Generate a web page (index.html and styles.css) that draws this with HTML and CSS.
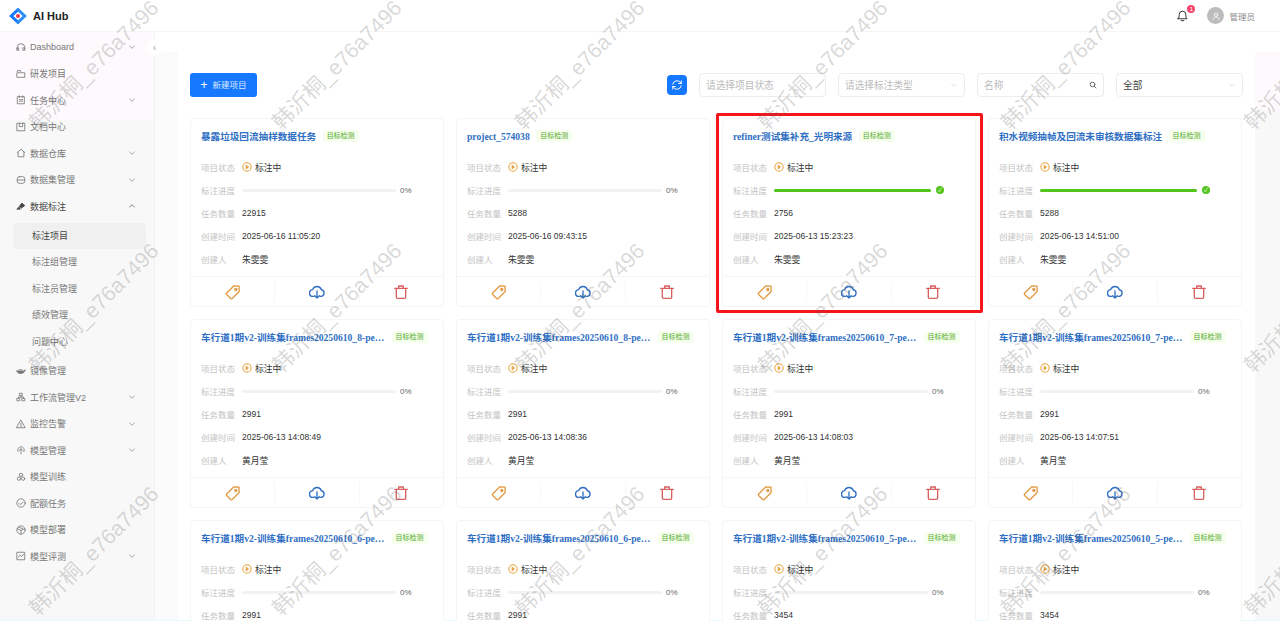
FILE: index.html
```html
<!DOCTYPE html>
<html lang="en">
<head>
    <meta charset="UTF-8">
    <title>AI Hub</title>
    <link rel="stylesheet" href="styles.css">
</head>
<body>
    <svg class="sprite" width="0" height="0">
        <symbol id="i-tag" viewBox="0 0 24 24"><path d="M2.500 13.500 13 3l8 .3.300 8-10.500 10.500a1.600 1.600 0 0 1-2.200 0l-6.100-6.100a1.600 1.600 0 0 1 0-2.200z"/><circle cx="16.200" cy="8.200" r="1.500"/></symbol>
        <symbol id="i-cloud" viewBox="0 0 24 24"><path d="M7.500 18.500H6a5 5 0 0 1-.5-10 6.800 6.800 0 0 1 13 .1 5 5 0 0 1-.5 9.900h-1.500"/><path d="M12 10.500v10M8.500 17.500 12 21l3.500-3.500"/></symbol>
        <symbol id="i-trash" viewBox="0 0 24 24"><path d="M2.500 6.500h19M8.500 6.500V3h7v3.500M5 6.500V20a1.500 1.500 0 0 0 1.500 1.500h11A1.500 1.500 0 0 0 19 20V6.500"/></symbol>
        <symbol id="i-play" viewBox="0 0 24 24"><circle cx="12" cy="12" r="10"/><path d="M10 8l5 4-5 4z"/></symbol>
        <symbol id="i-down" viewBox="0 0 24 24"><path d="M5 9l7 7 7-7"/></symbol>
        <symbol id="i-up" viewBox="0 0 24 24"><path d="M5 15l7-7 7 7"/></symbol>
        <symbol id="i-headset" viewBox="0 0 24 24"><path d="M3 17v-4a9 9 0 0 1 18 0v4"/><path d="M3 14h3.500v6H3zM17.500 14H21v6h-3.500z"/></symbol>
        <symbol id="i-folder" viewBox="0 0 24 24"><path d="M3 6V4h8v2M3 9h18v11H3z"/></symbol>
        <symbol id="i-task" viewBox="0 0 24 24"><path d="M4 4h16v17H4zM8 2v4M16 2v4M8 11h8M8 15h8"/></symbol>
        <symbol id="i-doc" viewBox="0 0 24 24"><path d="M3 3h18v18H3zM8 3v8h8V3"/></symbol>
        <symbol id="i-home" viewBox="0 0 24 24"><path d="M3 11 12 3l9 8M5 9.500V21h14V9.500"/></symbol>
        <symbol id="i-db" viewBox="0 0 24 24"><rect x="3" y="4" width="18" height="16" rx="5"/><path d="M3 12h18"/></symbol>
        <symbol id="i-pen" viewBox="0 0 24 24"><path d="M3 20l4-1 3 1-3-5zM8 13l6-8 7 6-8 6z" fill="currentColor"/></symbol>
        <symbol id="i-whale" viewBox="0 0 24 24"><path d="M2 12h18c1-2 1-3 2-3-1 6-5 9-11 9-5 0-8-2-9-6z" fill="currentColor"/><path d="M7 9h8"/></symbol>
        <symbol id="i-flow" viewBox="0 0 24 24"><path d="M9 3h6v6H9zM3 15h6v6H3zM15 15h6v6h-6zM12 9v3M6 15v-3h12v3"/></symbol>
        <symbol id="i-warn" viewBox="0 0 24 24"><path d="M12 3 22 21H2zM12 10v6M12 18v1"/></symbol>
        <symbol id="i-model" viewBox="0 0 24 24"><path d="M5 16a8 8 0 1 1 14 0M12 21V9M8 13l4-4 4 4"/></symbol>
        <symbol id="i-train" viewBox="0 0 24 24"><circle cx="12" cy="7" r="4"/><circle cx="7" cy="16" r="4"/><circle cx="17" cy="16" r="4"/></symbol>
        <symbol id="i-quota" viewBox="0 0 24 24"><circle cx="12" cy="12" r="10"/><path d="M7 13l3 3 7-6"/></symbol>
        <symbol id="i-deploy" viewBox="0 0 24 24"><circle cx="12" cy="12" r="10"/><path d="M3 9l9 4 9-4M12 13v9M7 5l9 4"/></symbol>
        <symbol id="i-chart" viewBox="0 0 24 24"><path d="M3 3h18v18H3zM6 15l4-5 4 3 4-5"/></symbol>
        <symbol id="i-refresh" viewBox="0 0 24 24"><path d="M3.500 10.500A8.700 8.700 0 0 1 19 7l1.500 2M20.500 4v5h-5M20.500 13.500A8.700 8.700 0 0 1 5 17l-1.500-2M3.500 20v-5h5"/></symbol>
        <symbol id="i-search" viewBox="0 0 24 24"><circle cx="10.500" cy="10.500" r="7"/><path d="M16 16l5 5"/></symbol>
        <symbol id="i-bell" viewBox="0 0 24 24"><path d="M3.500 18h17c-2-2-2.500-3.500-2.500-8a6 6 0 0 0-12 0c0 4.500-.5 6-2.500 8zM9.500 21.500h5"/></symbol>
        <symbol id="i-user" viewBox="0 0 24 24"><circle cx="12" cy="9" r="4"/><path d="M5 20c1-4 4-6 7-6s6 2 7 6"/></symbol>
    </svg>

    <div class="app">
        <header class="topbar">
            <div class="brand">
                <svg class="logo" viewBox="0 0 24 24">
                    <path d="M13 3.500 4 12l9 8.500" fill="none" stroke="#1677ff" stroke-width="3.600"/>
                    <path d="M11 3.500 20 12l-9 8.500" fill="none" stroke="#2f8ff7" stroke-width="3.600"/>
                    <circle cx="12" cy="12" r="2.400" fill="#e8384f"/>
                </svg>
                <span>AI Hub</span>
            </div>
            <div class="top-right">
                <div class="bell">
                    <svg class="ico"><use href="#i-bell"/></svg>
                    <span class="badge">1</span>
                </div>
                <div class="avatar"><svg class="ico"><use href="#i-user"/></svg></div>
                <span class="username">管理员</span>
            </div>
        </header>

        <div class="layout">
            <aside class="sidebar">
                <nav class="menu">
                    <a class="menu-item"><svg class="ico"><use href="#i-headset"/></svg><span>Dashboard</span><svg class="ico arrow"><use href="#i-down"/></svg></a>
                    <a class="menu-item"><svg class="ico"><use href="#i-folder"/></svg><span>研发项目</span></a>
                    <a class="menu-item"><svg class="ico"><use href="#i-task"/></svg><span>任务中心</span><svg class="ico arrow"><use href="#i-down"/></svg></a>
                    <a class="menu-item"><svg class="ico"><use href="#i-doc"/></svg><span>文档中心</span></a>
                    <a class="menu-item"><svg class="ico"><use href="#i-home"/></svg><span>数据仓库</span><svg class="ico arrow"><use href="#i-down"/></svg></a>
                    <a class="menu-item"><svg class="ico"><use href="#i-db"/></svg><span>数据集管理</span><svg class="ico arrow"><use href="#i-down"/></svg></a>
                    <a class="menu-item open"><svg class="ico"><use href="#i-pen"/></svg><span>数据标注</span><svg class="ico arrow"><use href="#i-up"/></svg></a>
                    <div class="submenu">
                        <a class="sub-item active">标注项目</a>
                        <a class="sub-item">标注组管理</a>
                        <a class="sub-item">标注员管理</a>
                        <a class="sub-item">绩效管理</a>
                        <a class="sub-item">问题中心</a>
                    </div>
                    <a class="menu-item"><svg class="ico"><use href="#i-whale"/></svg><span>镜像管理</span></a>
                    <a class="menu-item"><svg class="ico"><use href="#i-flow"/></svg><span>工作流管理V2</span><svg class="ico arrow"><use href="#i-down"/></svg></a>
                    <a class="menu-item"><svg class="ico"><use href="#i-warn"/></svg><span>监控告警</span><svg class="ico arrow"><use href="#i-down"/></svg></a>
                    <a class="menu-item"><svg class="ico"><use href="#i-model"/></svg><span>模型管理</span><svg class="ico arrow"><use href="#i-down"/></svg></a>
                    <a class="menu-item"><svg class="ico"><use href="#i-train"/></svg><span>模型训练</span></a>
                    <a class="menu-item"><svg class="ico"><use href="#i-quota"/></svg><span>配额任务</span></a>
                    <a class="menu-item"><svg class="ico"><use href="#i-deploy"/></svg><span>模型部署</span></a>
                    <a class="menu-item"><svg class="ico"><use href="#i-chart"/></svg><span>模型评测</span><svg class="ico arrow"><use href="#i-down"/></svg></a>
                </nav>
                <button class="collapse">‹</button>
            </aside>

            <main class="content">
                <div class="toolbar">
                    <button class="btn-new"><span class="plus">+</span>新建项目</button>
                    <div class="filters">
                        <button class="btn-refresh"><svg class="ico"><use href="#i-refresh"/></svg></button>
                        <div class="field placeholder">请选择项目状态</div>
                        <div class="field placeholder">请选择标注类型<svg class="ico"><use href="#i-down"/></svg></div>
                        <div class="field placeholder">名称<svg class="ico dark"><use href="#i-search"/></svg></div>
                        <div class="field">全部<svg class="ico"><use href="#i-down"/></svg></div>
                    </div>
                </div>

                <div class="cards" id="cards"></div>
            </main>
        </div>
    </div>

    <div class="watermarks" id="watermarks"></div>

    <script>
        // card data, in page order
        var P1 = "车行道1期v2-训练集frames20250610_";
        var projects = [
            { title: "暴露垃圾回流抽样数据任务", pct: 0, count: 22915, time: "2025-06-16 11:05:20", who: "朱雯雯" },
            { title: "project_574038", pct: 0, count: 5288, time: "2025-06-16 09:43:15", who: "朱雯雯" },
            { title: "refiner测试集补充_光明来源", pct: 100, count: 2756, time: "2025-06-13 15:23:23", who: "朱雯雯" },
            { title: "积水视频抽帧及回流未审核数据集标注", pct: 100, count: 5288, time: "2025-06-13 14:51:00", who: "朱雯雯" },
            { title: P1 + "8-person", pct: 0, count: 2991, time: "2025-06-13 14:08:49", who: "黄月莹" },
            { title: P1 + "8-person", pct: 0, count: 2991, time: "2025-06-13 14:08:36", who: "黄月莹" },
            { title: P1 + "7-person", pct: 0, count: 2991, time: "2025-06-13 14:08:03", who: "黄月莹" },
            { title: P1 + "7-person", pct: 0, count: 2991, time: "2025-06-13 14:07:51", who: "黄月莹" },
            { title: P1 + "6-person", pct: 0, count: 2991, time: "2025-06-13 14:07:30", who: "黄月莹" },
            { title: P1 + "6-person", pct: 0, count: 2991, time: "2025-06-13 14:07:12", who: "黄月莹" },
            { title: P1 + "5-person", pct: 0, count: 3454, time: "2025-06-13 14:06:50", who: "黄月莹" },
            { title: P1 + "5-person", pct: 0, count: 3454, time: "2025-06-13 14:06:31", who: "黄月莹" }
        ];

        function progressHtml(pct) {
            if (pct === 100) {
                return "<div class='bar'><div class='bar-fill'></div></div><span class='done'>✓</span>";
            }
            return "<div class='bar'></div><span class='pct'>" + pct + "%</span>";
        }

        var html = "";
        projects.forEach(function(p, i) {
            html += "<div class='card'>" +
                "<div class='card-body'>" +
                "<div class='card-title'><span class='name'>" + p.title + "</span><span class='tag'>目标检测</span></div>" +
                "<div class='row'><label>项目状态</label><svg class='ico state'><use href='#i-play'/></svg><span class='status'>标注中</span></div>" +
                "<div class='row'><label>标注进度</label>" + progressHtml(p.pct) + "</div>" +
                "<div class='row'><label>任务数量</label><span>" + p.count + "</span></div>" +
                "<div class='row'><label>创建时间</label><span>" + p.time + "</span></div>" +
                "<div class='row'><label>创建人</label><span class='status'>" + p.who + "</span></div>" +
                "</div>" +
                "<div class='card-foot'>" +
                "<div><svg class='ico orange'><use href='#i-tag'/></svg></div>" +
                "<div><svg class='ico blue'><use href='#i-cloud'/></svg></div>" +
                "<div><svg class='ico red'><use href='#i-trash'/></svg></div>" +
                "</div>" +
                (i === 2 ? "<div class='highlight'></div>" : "") +
                "</div>";
        });
        document.getElementById("cards").innerHTML = html;

        var marks = "";
        for (var i = 0; i < 18; i++) {
            marks += "<span>韩沂桐_e76a7496</span>";
        }
        document.getElementById("watermarks").innerHTML = marks;
    </script>
</body>
</html>
```

FILE: styles.css
```css
* {
    box-sizing: border-box;
}

html, body {
    margin: 0;
    height: 100%;
    overflow: hidden;
}

body {
    font-family: "Liberation Sans", "Noto Sans CJK SC", sans-serif;
    font-size: 8.5px;
    color: #333;
    background-color: #fff;
}

.sprite {
    position: absolute;
}

.ico {
    width: 10px;
    height: 10px;
    fill: none;
    stroke: currentColor;
    stroke-width: 2;
    stroke-linecap: round;
    stroke-linejoin: round;
    flex: none;
}

.app {
    height: 621px;
    display: flex;
    flex-direction: column;
    border-bottom: 1px solid #e4fbff;
}

/* header */
.topbar {
    height: 32px;
    flex: none;
    display: flex;
    justify-content: space-between;
    align-items: center;
    padding: 0 25px 0 8px;
    background-color: #fff;
    border-bottom: 1px solid #f5f5f5;
}

.brand {
    display: flex;
    align-items: center;
    gap: 5px;
    font-size: 11px;
    font-weight: bold;
    color: #222;
}

.logo {
    width: 20px;
    height: 20px;
}

.top-right {
    display: flex;
    align-items: center;
}

.bell {
    position: relative;
    display: flex;
    color: #333;
    margin-right: 18px;
}

.bell .ico {
    width: 13px;
    height: 13px;
    stroke-width: 1.8;
}

.badge {
    position: absolute;
    top: -4.500px;
    right: -6px;
    width: 8px;
    height: 8px;
    border-radius: 50%;
    background-color: #f5486e;
    color: #fff;
    font-size: 6px;
    line-height: 8px;
    text-align: center;
}

.avatar {
    width: 17px;
    height: 17px;
    border-radius: 50%;
    background-color: #bdbdbd;
    color: #fff;
    display: flex;
    align-items: center;
    justify-content: center;
    margin-right: 5px;
}

.username {
    color: #888;
    font-size: 8.5px;
}

/* sidebar */
.layout {
    flex: 1;
    display: flex;
    min-height: 0;
}

.sidebar {
    position: relative;
    width: 155px;
    flex: none;
    padding-top: 1.700px;
    background: linear-gradient(#fdf9fc 0, #fdf9fc 88px, #f8f8f8 88px);
    border-right: 1px solid #f2f2f2;
}

.menu-item {
    height: 26.550px;
    display: flex;
    align-items: center;
    padding: 0 18px 0 16px;
    color: #777;
    font-size: 9px;
}

.menu-item span {
    margin-left: 4px;
    flex: 1;
}

.menu-item .arrow {
    width: 8px;
    height: 8px;
}

.menu-item.open {
    color: #444;
}

.submenu {
    padding-top: 3px;
    margin-bottom: 2px;
}

.sub-item {
    display: block;
    height: 26.550px;
    line-height: 26.550px;
    margin: 0 8px 0 13px;
    padding-left: 19px;
    color: #777;
    font-size: 9px;
    border-radius: 4px;
}

.sub-item.active {
    background-color: #f0f0f0;
    color: #444;
}

.collapse {
    position: absolute;
    top: 7px;
    right: -9px;
    width: 17px;
    height: 17px;
    padding: 0;
    border: none;
    border-radius: 50%;
    background-color: #fff;
    color: #aaa;
    font-size: 11px;
    line-height: 15px;
}

/* main: white panel with grey strips left and right of it */
.content {
    flex: 1;
    min-width: 0;
    padding: 41px 37px 0 35px;
    background:
        linear-gradient(#fff, #fff) top / 100% 20px no-repeat,
        linear-gradient(90deg, #fbfbfb 23px, transparent 23px, transparent calc(100% - 25px), #f8f8f8 calc(100% - 25px)) bottom / 100% calc(100% - 78px) no-repeat,
        linear-gradient(90deg, #fbfbfb 23px, #fff 23px, #fff calc(100% - 25px), #fdf9fc calc(100% - 25px));
}

.toolbar {
    display: flex;
    justify-content: space-between;
    align-items: center;
    height: 24px;
    margin-bottom: 21px;
}

.btn-new {
    width: 67px;
    height: 24px;
    border: none;
    border-radius: 3px;
    background-color: #1677ff;
    color: #dbe9ff;
    font-family: inherit;
    font-size: 8.5px;
    padding: 0;
}

.plus {
    font-size: 12px;
    margin-right: 5px;
    vertical-align: -1px;
    color: #fff;
}

.filters {
    display: flex;
    align-items: center;
    gap: 12px;
}

.btn-refresh {
    width: 20px;
    height: 20px;
    padding: 0;
    border: none;
    border-radius: 4px;
    background-color: #1677ff;
    color: #fff;
    display: flex;
    align-items: center;
    justify-content: center;
}

.btn-refresh .ico {
    width: 12px;
    height: 12px;
}

.field {
    width: 127px;
    height: 24px;
    padding: 0 6px;
    display: flex;
    align-items: center;
    justify-content: space-between;
    border: 1px solid #ececec;
    border-radius: 4px;
    font-size: 9.700px;
    color: #444;
    background-color: #fff;
}

.field.placeholder {
    color: #bbb;
}

.field .ico {
    width: 8px;
    height: 8px;
    color: #bbb;
    stroke-width: 1.5;
}

.field .ico.dark {
    color: #555;
    stroke-width: 2.5;
}

/* project cards */
.cards {
    display: grid;
    grid-template-columns: repeat(4, 254px);
    grid-auto-rows: 189px;
    gap: 12px;
}

.card {
    position: relative;
    display: flex;
    flex-direction: column;
    border: 1px solid #f5f5f5;
    border-radius: 4px;
    background-color: #fff;
}

.card-body {
    flex: 1;
    padding: 10px 10px 0;
}

.card-title {
    height: 14px;
    display: flex;
    align-items: center;
    gap: 6.500px;
    margin-bottom: 12.800px;
}

.name {
    max-width: 184px;
    overflow: hidden;
    white-space: nowrap;
    text-overflow: ellipsis;
    font-family: "Liberation Serif", "Noto Sans CJK SC", serif;
    font-size: 9.600px;
    font-weight: bold;
    color: #2f6fc4;
}

.tag {
    flex: none;
    width: 36px;
    height: 12px;
    line-height: 12px;
    text-align: center;
    font-size: 7px;
    color: #52a82a;
    background-color: #f6ffed;
    border-radius: 2px;
}

.row {
    height: 23px;
    display: flex;
    align-items: center;
}

.row label {
    width: 41px;
    flex: none;
    color: #c4c4c4;
}

.status {
    font-size: 8.800px;
}

.state {
    width: 10px;
    height: 10px;
    color: #e8a33d;
    margin-right: 3px;
    stroke-width: 2.500;
}

.bar {
    width: 154px;
    height: 3px;
    border-radius: 2px;
    background-color: #f2f2f2;
}

.bar-fill {
    height: 100%;
    width: 157px;
    border-radius: 2px;
    background-color: #52c41a;
}

.pct {
    margin-left: 4px;
    font-size: 8px;
    color: #666;
}

.done {
    width: 8px;
    height: 8px;
    margin-left: 8px;
    border-radius: 50%;
    background-color: #52c41a;
    color: #fff;
    font-size: 6px;
    line-height: 8px;
    text-align: center;
}

.card-foot {
    height: 30px;
    flex: none;
    display: flex;
    border-top: 1px solid #f5f5f5;
}

.card-foot div {
    flex: 1;
    display: flex;
    align-items: center;
    justify-content: center;
    margin: 4px 0;
    border-right: 1px solid #f7f7f7;
}

.card-foot div:last-child {
    border-right: none;
}

.card-foot .ico {
    width: 16px;
    height: 16px;
    stroke-width: 2;
}

.orange {
    color: #e29a43;
}

.blue {
    color: #2f6fc4;
}

.red {
    color: #d9605f;
}

/* red annotation round the third card */
.highlight {
    position: absolute;
    top: -6px;
    left: -7px;
    right: -8px;
    bottom: -7px;
    border: 3px solid #f5161c;
    border-radius: 2px;
    pointer-events: none;
}

/* watermark */
.watermarks {
    position: absolute;
    top: -58px;
    left: -29px;
    display: grid;
    grid-template-columns: repeat(6, 243px);
    grid-auto-rows: 243px;
    pointer-events: none;
}

.watermarks span {
    display: flex;
    align-items: center;
    justify-content: center;
    white-space: nowrap;
    font-size: 21.500px;
    color: rgba(90, 90, 90, 0.24);
    transform: rotate(-45deg);
}
```
